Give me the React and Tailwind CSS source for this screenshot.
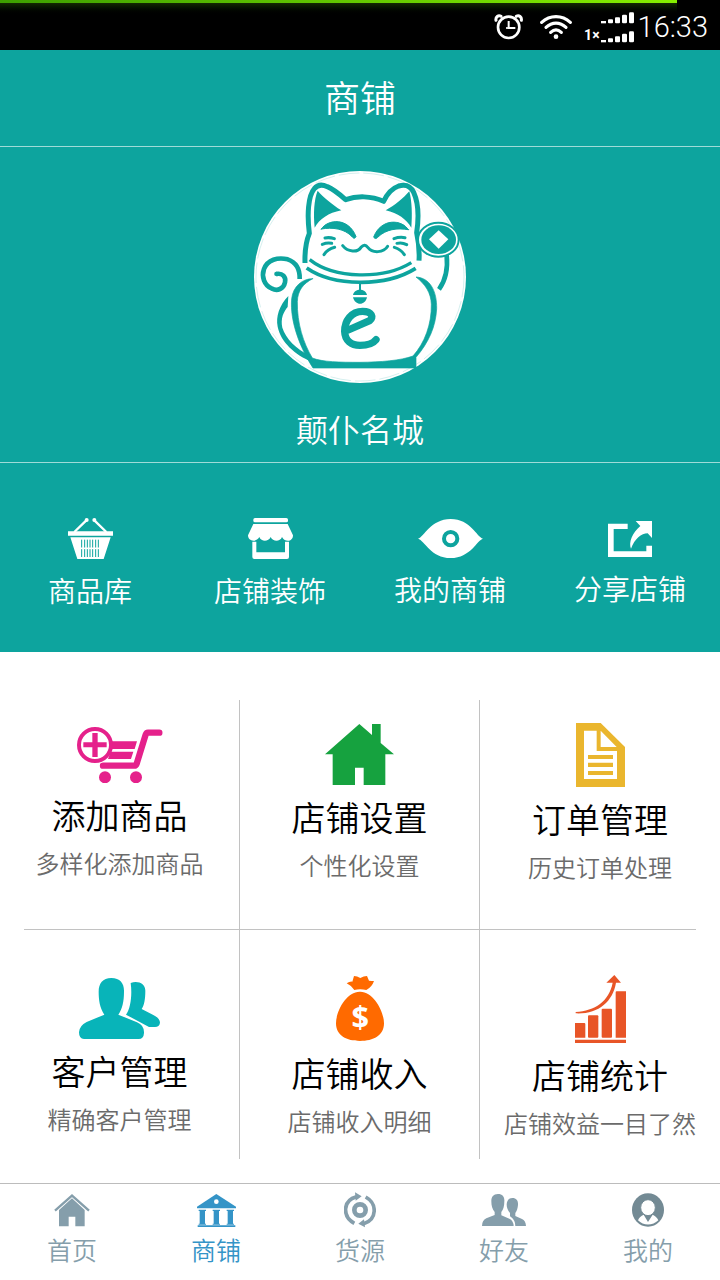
const QUICK_ACTIONS = [
  { icon: BasketIcon, label: '商品库' },
  { icon: StoreIcon, label: '店铺装饰' },
  { icon: EyeIcon, label: '我的商铺' },
  { icon: ShareIcon, label: '分享店铺' },
];

const MENU_TOP = [
  { icon: CartIcon, title: '添加商品', desc: '多样化添加商品' },
  { icon: HouseIcon, title: '店铺设置', desc: '个性化设置' },
  { icon: OrderIcon, title: '订单管理', desc: '历史订单处理' },
];

const MENU_BOTTOM = [
  { icon: CustomersIcon, title: '客户管理', desc: '精确客户管理' },
  { icon: MoneyBagIcon, title: '店铺收入', desc: '店铺收入明细' },
  { icon: ChartIcon, title: '店铺统计', desc: '店铺效益一目了然' },
];

const TABS = [
  { icon: HomeTabIcon, label: '首页' },
  { icon: ShopTabIcon, label: '商铺', active: true },
  { icon: SourceTabIcon, label: '货源' },
  { icon: FriendsTabIcon, label: '好友' },
  { icon: MeTabIcon, label: '我的' },
];

/* ---------- Status bar ---------- */

function AlarmIcon() {
  return (
    <svg width="30" height="28" viewBox="43 36 90 84" fill="none" stroke="#fff" aria-hidden>
      <circle cx="87" cy="79" r="32" strokeWidth="8" />
      <path d="M87 60v21h20" strokeWidth="6" />
      <path d="M79 81h8" strokeWidth="5" />
      <path d="M49 58c-2-10 7-17 15-12M125 58c2-10-7-17-15-12" strokeWidth="9" strokeLinecap="round" />
    </svg>
  );
}

function WifiIcon() {
  return (
    <svg width="32" height="28" viewBox="179 36 96 84" fill="none" stroke="#fff" aria-hidden>
      <g strokeWidth="9.5" strokeLinecap="round">
        <path d="M184 64c25-23 61-23 86 0" />
        <path d="M197 79c18-17 42-17 60 0" />
        <path d="M211 94c10-9 22-9 32 0" />
      </g>
      <circle cx="227" cy="107" r="7" fill="#fff" stroke="none" />
    </svg>
  );
}

function SignalIcon() {
  return (
    <svg width="33" height="31" viewBox="363 35 99 93" fill="#fff" aria-hidden>
      <g id="bars">
        <rect x="363" y="62" width="15" height="7" />
        <rect x="384" y="57" width="15" height="12" rx="3" />
        <rect x="405" y="51" width="15" height="18" rx="3" />
        <rect x="426" y="43" width="15" height="26" rx="4" />
        <rect x="447" y="36" width="15" height="33" rx="4" />
      </g>
      <use href="#bars" y="57" />
    </svg>
  );
}

function StatusBar() {
  return (
    <div className="relative flex h-[50px] items-center justify-end bg-black pr-3 text-white">
      <div className="absolute left-0 top-0 h-4 w-[94%] bg-linear-to-b from-[#1d3a00] to-black">
        <div className="h-[3px] bg-linear-to-r from-[#3da000] to-[#86f000]" />
      </div>
      <div className="relative flex items-center pt-1">
        <AlarmIcon />
        <span className="ml-4">
          <WifiIcon />
        </span>
        <span className="ml-3 self-end font-[Roboto] text-sm/4 font-bold">1×</span>
        <span className="ml-px">
          <SignalIcon />
        </span>
        <time className="ml-1 font-[Roboto] text-[29px]/8 font-light">16:33</time>
      </div>
    </div>
  );
}

/* ---------- Avatar ---------- */

function LuckyCat() {
  return (
    <svg
      width="212"
      height="212"
      viewBox="42 33 636 636"
      fill="none"
      stroke="#0da49e"
      strokeLinecap="round"
      strokeLinejoin="round"
      role="img"
      aria-label="颠仆名城"
    >
      <circle cx="360" cy="351" r="318" fill="#fff" stroke="none" />
      <circle cx="360" cy="351" r="312" strokeWidth="1.5" strokeDasharray="60 14" opacity=".35" />

      {/* head */}
      <path
        d="M195 309C194 275 197 247 208 220C201 165 204 108 223 86C235 71 249 74 262 80C283 89 301 105 317 119C350 107 393 107 431 124C441 102 459 84 476 78C499 71 513 80 521 97C536 130 536 178 530 218C536 246 539 272 537 302"
        strokeWidth="15"
        strokeLinecap="butt"
      />
      <path d="M224 203C220 160 222 119 233 92C249 111 277 134 304 151C265 159 239 177 224 203Z" fill="#0da49e" stroke="none" />
      <path d="M514 203C517 165 516 125 508 94C490 115 464 136 437 151C474 159 499 178 514 203Z" fill="#0da49e" stroke="none" />

      {/* face */}
      <path d="M244 207C264 176 326 172 348 230C344 237 340 235 336 230C314 206 278 201 244 207Z" fill="#0da49e" strokeWidth="3" />
      <path d="M505 209C486 178 424 173 401 231C405 238 410 236 414 231C438 208 471 203 505 209Z" fill="#0da49e" strokeWidth="3" />
      <g strokeWidth="9">
        <path d="M255 234Q268 231 283 236M247 253Q262 247 275 250M252 284Q263 267 284 262" />
        <path d="M495 233Q478 230 462 236M500 254Q486 246 471 250M493 284Q482 267 463 262" />
        <path d="M308 257C324 277 353 278 363 262C371 253 377 254 384 263C397 280 431 279 443 259" />
      </g>

      {/* collar and bell */}
      <g strokeLinecap="butt">
        <path d="M209 299C284 358 431 359 514 308" strokeWidth="10" />
        <path d="M200 324C281 380 436 382 527 325" strokeWidth="11" />
        <path d="M360 367v26" strokeWidth="6" />
      </g>
      <path d="M339 405C343 384 377 384 381 405ZM339 412H381C376 438 345 438 339 412Z" fill="#0da49e" stroke="none" />

      {/* body */}
      <path
        d="M218 356C188 355 159 379 155 416C149 484 180 563 219 624H528V592C567 546 587 500 590 446C591 392 569 353 528 351C556 373 573 398 574 433C575 493 554 549 519 588C480 602 424 606 360 607C302 607 246 606 217 594C190 549 171 490 172 425C173 392 189 371 218 356Z"
        fill="#0da49e"
        strokeWidth="2"
      />

      {/* tail */}
      <path d="M109 342C127 338 139 351 135 367C131 387 112 394 96 386C72 376 64 349 72 327C83 299 113 291 143 298C169 307 180 328 179 357" strokeWidth="14" strokeLinecap="butt" />
      <path d="M109 342h2" strokeWidth="13" />
      <path d="M145 408C118 436 107 470 113 500C122 546 164 584 217 606L207 585C170 568 137 536 127 503C121 475 131 455 143 441Z" fill="#0da49e" stroke="none" />

      {/* raised paw with coin */}
      <path d="M620 286C624 325 616 362 597 388" strokeWidth="14" strokeLinecap="butt" />
      <ellipse cx="595" cy="239" rx="61" ry="51" fill="#fff" strokeWidth="6" />
      <ellipse cx="596" cy="239" rx="52" ry="43" fill="#0da49e" stroke="none" />
      <path d="M596 211L625 238L596 266L567 238Z" fill="#fff" stroke="none" />

      {/* emblem on the belly */}
      <path d="M318 513L389 482C402 472 396 454 368 454C334 454 314 482 314 514C315 541 333 556 360 556C384 556 400 549 408 539" strokeWidth="22" />
    </svg>
  );
}

/* ---------- Quick action icons ---------- */

function BasketIcon() {
  return (
    <svg width="45" height="41" viewBox="81 54 135 123" fill="#fff" aria-hidden>
      <path d="M100 96L136 61M196 96L160 61" stroke="#fff" strokeWidth="7" />
      <circle cx="137" cy="60" r="6" />
      <circle cx="160" cy="60" r="6" />
      <path d="M81 94h135v13H81zM88 112h121l-21 65h-79z" />
      <path d="M122 119v52M131 119v52M139 119v52M147 119v52M155 119v52M164 119v52M172 119v52" stroke="#0da49e" strokeWidth="3" />
      <path d="M118 145h60" stroke="#fff" strokeWidth="5" />
    </svg>
  );
}

function StoreIcon() {
  return (
    <svg width="45" height="41" viewBox="621 54 135 123" fill="#fff" aria-hidden>
      <rect x="637" y="54" width="104" height="13" rx="5" />
      <path d="M637 72h103l16 34c0 20-24 22-33 5c-6 15-27 15-34 0c-7 15-28 15-34 0c-9 17-34 14-34-5z" />
      <path d="M634 125h12v32h86v-32h12v46q0 6-6 6h-98q-6 0-6-6z" />
    </svg>
  );
}

function EyeIcon() {
  return (
    <svg width="65" height="39" viewBox="110 57 195 117" fill="#fff" aria-hidden>
      <path d="M110 116C128 112 148 57 208 57S286 111 305 116C287 120 268 174 208 174S130 121 110 116Z" />
      <circle cx="208" cy="116" r="20" stroke="#0da49e" strokeWidth="12" />
    </svg>
  );
}

function ShareIcon() {
  return (
    <svg width="44" height="36" viewBox="684 60 132 108" fill="#fff" aria-hidden>
      <path d="M684 68h59v16h-42v67h98v-17h17v34H684z" />
      <path d="M767 60h49v51l-13-14c-19 0-39 17-50 46c-8-19 4-48 28-68z" />
    </svg>
  );
}

/* ---------- Menu icons ---------- */

function CartIcon() {
  return (
    <svg width="86" height="56" viewBox="165 78 258 168" fill="#e5218b" aria-hidden>
      <path d="M266 121h79l-7 23h-71zM266 152h68l-7 22h-69z" />
      <path d="M243 194h94q5 0 7-6l27-87q2-6 7-6h34" fill="none" stroke="#e5218b" strokeWidth="19" strokeLinecap="round" />
      <circle cx="219" cy="132" r="48" fill="#fff" stroke="#e5218b" strokeWidth="12" />
      <path d="M211 96h16v28h27v15h-27v29h-16v-29h-27v-15h27z" />
      <circle cx="249" cy="229" r="18" />
      <circle cx="342" cy="229" r="18" />
    </svg>
  );
}

function HouseIcon() {
  return (
    <svg width="69" height="61" viewBox="226 69 207 183" fill="#16a23f" aria-hidden>
      <path d="M329 69L367 102V69H393V126L433 160H407V252H342V200H316V252H249V160H226Z" />
    </svg>
  );
}

function OrderIcon() {
  return (
    <svg width="49" height="64" viewBox="975 66 147 192" fill="#eab62e" aria-hidden>
      <path d="M975 66h74l73 72v120H975z" />
      <path d="M999 89h38v61h61v84h-99zM1049 89l48 49h-48z" fill="#fff" />
      <path d="M1011 162h75v12h-75zM1011 185h75v13h-75zM1011 210h75v12h-75z" />
    </svg>
  );
}

function CustomersIcon() {
  return (
    <svg width="81" height="61" viewBox="177 51 243 183" fill="#08b4b9" aria-hidden>
      <path d="M274 51C301 51 313 68 312 92C312 122 307 143 295 161L351 184Q373 193 372 216Q371 234 356 234H192Q177 234 177 214Q178 194 200 183L253 161C239 139 236 117 236 92C236 68 248 51 274 51Z" />
      <path d="M332 66C355 58 376 69 376 89C376 113 373 132 365 144L400 162C414 169 420 177 420 185Q418 198 405 198H387L318 161C332 143 337 100 332 66Z" />
    </svg>
  );
}

function MoneyBagIcon() {
  return (
    <svg width="48" height="65" viewBox="195 45 144 195" fill="#ff6a00" aria-hidden>
      <path d="M249 45Q258 45 268 51Q278 45 288 45L294 59Q303 60 309 60Q303 78 286 87Q267 82 250 87Q240 73 227 67Q236 61 244 62Z" />
      <path d="M267 92C307 91 339 151 339 187C339 224 307 240 267 240S195 224 195 187C195 151 226 91 267 92Z" />
      <text x="268" y="202" fill="#fff" fontSize="92" fontWeight="700" textAnchor="middle" fontFamily="Open Sans, sans-serif">
        $
      </text>
    </svg>
  );
}

function ChartIcon() {
  return (
    <svg width="51" height="68" viewBox="912 42 153 204" fill="#e85527" aria-hidden>
      <path d="M912 186h28q3 0 3 3v41h-31z" />
      <rect x="951" y="163" width="31" height="67" rx="3" />
      <rect x="992" y="143" width="31" height="87" rx="3" />
      <path d="M1037 91h28v139h-31V94q0-3 3-3zM912 236h153v10H912z" />
      <path d="M914 153C972 149 1014 121 1025 65H1006L1030 42L1050 65H1035C1025 123 981 160 914 157Z" />
    </svg>
  );
}

/* ---------- Tab icons ---------- */

function HomeTabIcon() {
  return (
    <svg width="36" height="33" viewBox="102 56 108 99" fill="#859eab" aria-hidden>
      <path d="M105 106L156 61L207 106" fill="none" stroke="#859eab" strokeWidth="7" />
      <path d="M156 69L194 104V153H166V124H146V153H117V104Z" />
    </svg>
  );
}

function ShopTabIcon() {
  return (
    <svg width="39" height="33" viewBox="528 54 117 99" fill="#3494c7" aria-hidden>
      <path d="M586 54L645 92V97H528V92Z" />
      <circle cx="586" cy="77" r="7" fill="#fff" />
      <path d="M533 101h22v4h-3v38h3v3h-22v-3h3v-38h-3zM575 101h22v4h-3v38h3v3h-22v-3h3v-38h-3zM617 101h22v4h-3v38h3v3h-22v-3h3v-38h-3zM530 148h113v5H530z" />
    </svg>
  );
}

function SourceTabIcon() {
  return (
    <svg width="32" height="36" viewBox="71 50 96 108" fill="#859eab" aria-hidden>
      <g fill="none" stroke="#859eab">
        <path d="M102 144C66 124 66 76 108 64M136 65C172 85 170 134 130 145" strokeWidth="11" />
        <circle cx="119" cy="104" r="17" strokeWidth="14" />
      </g>
      <path d="M104 51L124 63L106 76ZM134 156L114 145L131 132Z" />
    </svg>
  );
}

function FriendsTabIcon() {
  return (
    <svg width="44" height="32" viewBox="486 57 132 96" fill="#859eab" aria-hidden>
      <path d="M534 57C548 57 554 66 553 79C553 93 550 104 544 111V121L568 131Q580 136 581 153H486Q486 136 499 130L524 120V111C517 103 514 93 514 79C514 66 520 57 534 57Z" />
      <path d="M577 69C590 69 595 78 594 90C593 101 590 109 586 114V123L606 132Q617 137 618 153H586Q586 136 573 126L570 124V114C563 106 560 98 560 88C561 76 566 69 577 69Z" />
    </svg>
  );
}

function MeTabIcon() {
  return (
    <svg width="32" height="34" viewBox="936 50 96 102" aria-hidden>
      <ellipse cx="984" cy="101" rx="48" ry="50" fill="#738a94" />
      <path d="M954 132C957 124 963 119 971 115L984 137L998 115C1005 119 1012 124 1015 132C998 149 970 149 954 132Z" fill="#fff" />
      <ellipse cx="984" cy="94" rx="22" ry="24" fill="#fff" stroke="#738a94" strokeWidth="3" />
    </svg>
  );
}

/* ---------- Page ---------- */

function MenuRow({ items, className }) {
  return (
    <div className="grid grid-cols-3">
      {items.map(({ icon: Icon, title, desc }) => (
        <button
          key={title}
          type="button"
          className={`flex min-h-[229px] flex-col items-center justify-center border-[#c2c2c2] not-last:border-r ${className}`}
        >
          <Icon />
          <span className="mt-2 text-[34px]/12 text-black">{title}</span>
          <span className="mt-2 whitespace-nowrap text-2xl/8 text-[#6b6b6b]">{desc}</span>
        </button>
      ))}
    </div>
  );
}

export default function App() {
  return (
    <div className="flex min-h-screen flex-col bg-white font-['Noto_Sans_CJK_SC',sans-serif] font-[350]">
      <StatusBar />

      <div className="bg-[#0da49e] text-white">
        <header className="border-b border-[#9fdbd8] pb-6 pt-5">
          <h1 className="text-center text-4xl/13">商铺</h1>
        </header>

        <section className="flex flex-col items-center border-b border-[#9fdbd8] pb-3 pt-6">
          <LuckyCat />
          <p className="mt-[23px] text-[32px]/11">颠仆名城</p>
        </section>

        <nav className="grid grid-cols-4 pb-[42px] pt-[55px]">
          {QUICK_ACTIONS.map(({ icon: Icon, label }) => (
            <a key={label} href="#" className="flex flex-col items-center justify-center">
              <Icon />
              <span className="mt-[11px] text-[28px]/10">{label}</span>
            </a>
          ))}
        </nav>
      </div>

      <main className="flex-1 pb-6 pt-12">
        <MenuRow items={MENU_TOP} className="pb-6" />
        <hr className="mx-6 border-[#c2c2c2]" />
        <MenuRow items={MENU_BOTTOM} className="pt-6" />
      </main>

      <nav className="grid grid-cols-5 border-t border-[#bcbcbc] pb-[13px] pt-2">
        {TABS.map(({ icon: Icon, label, active }) => (
          <a
            key={label}
            href="#"
            aria-current={active ? 'page' : undefined}
            className={`flex flex-col items-center ${active ? 'text-[#3494c7]' : 'text-[#859eab]'}`}
          >
            <span className="flex h-9 items-center">
              <Icon />
            </span>
            <span className="mt-[3px] text-[25px]/9">{label}</span>
          </a>
        ))}
      </nav>
    </div>
  );
}
